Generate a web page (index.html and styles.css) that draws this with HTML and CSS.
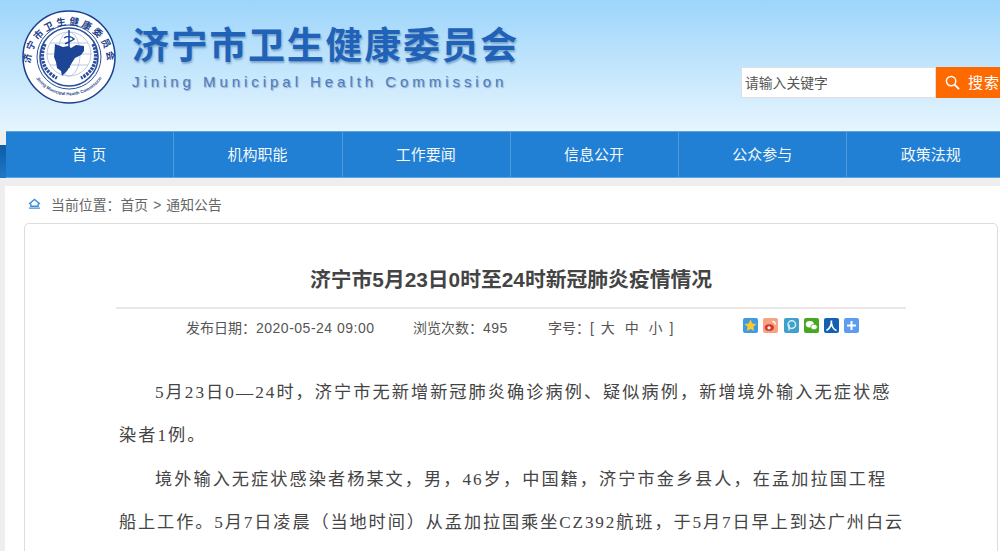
FILE: index.html
```html
<!DOCTYPE html>
<html lang="zh-CN">
<head>
    <meta charset="UTF-8">
    <title>济宁市5月23日0时至24时新冠肺炎疫情情况</title>
    <link rel="stylesheet" href="styles.css">
</head>
<body>
    <div class="top">
        <div class="header">
            <svg class="emblem" viewBox="0 0 94 94">
                <defs>
                    <path id="ring-top" d="M9.500 62 A38.500 38.500 0 1 1 84.500 62"/>
                    <path id="ring-bottom" d="M14 68 A40 40 0 0 0 80 68"/>
                </defs>
                <circle cx="47" cy="47" r="46" fill="#fff" stroke="#1d3f8e" stroke-width="1.5"/>
                <circle cx="47" cy="47" r="32" fill="#fff" stroke="#2a4f9c" stroke-width="1"/>
                <circle cx="47" cy="47" r="29" fill="none" stroke="#2a4f9c" stroke-width="1.600"/>
                <g fill="none" stroke="#a9bcdc" stroke-width=".8">
                    <ellipse cx="47" cy="44" rx="22" ry="22"/>
                    <ellipse cx="47" cy="44" rx="11" ry="22"/>
                    <path d="M25 44h44M28 33h38M28 55h38"/>
                </g>
                <path d="M33 34l8 3 5-1 3 2 5-3 8 1 0 5-3 4-6 3-2 3-3 5-3 5-3 3-2 2-1-5-4-3-1-6-2-5z" fill="#1d4596"/>
                <path d="M47 20v38M42 28c4-3 8-1 10 1-2 2-6 3-9 5" fill="none" stroke="#1d4596" stroke-width="1.500"/>
                <path d="M23 34c-6 13-2 27 12 34M71 34c6 13 2 27-12 34" fill="none" stroke="#2a4f9c" stroke-width="3.500" stroke-dasharray="2.500 1"/>
                <text class="emblem-cn"><textPath href="#ring-top" startOffset="50%" text-anchor="middle">济宁市卫生健康委员会</textPath></text>
                <text class="emblem-en"><textPath href="#ring-bottom" startOffset="50%" text-anchor="middle">Jining Municipal Health Commission</textPath></text>
            </svg>
            <div class="brand">
                <div class="brand-cn">济宁市卫生健康委员会</div>
                <div class="brand-en">Jining Municipal Health Commission</div>
            </div>
            <div class="search">
                <div class="search-input">请输入关键字</div>
                <div class="search-btn">
                    <svg class="search-icon" viewBox="0 0 16 16">
                        <circle cx="6.500" cy="6.500" r="5" fill="none" stroke="#fff" stroke-width="1.600"/>
                        <path d="M10.200 10.200L15 15" stroke="#fff" stroke-width="2"/>
                    </svg>
                    搜索
                </div>
            </div>
        </div>
        <div class="nav-row">
            <div class="nav-fold"></div>
            <ul class="nav">
                <li>首 页</li>
                <li>机构职能</li>
                <li>工作要闻</li>
                <li>信息公开</li>
                <li>公众参与</li>
                <li>政策法规</li>
            </ul>
        </div>
    </div>

    <div class="page">
        <div class="crumb">
            <svg class="crumb-icon" viewBox="0 0 14 12">
                <path d="M1 6.500L7 1.500l6 5M3 6v3h8V6M1 11h12" fill="none" stroke="#3f8fd6" stroke-width="1.500"/>
            </svg>
            <span>当前位置：首页<span class="crumb-sep">&gt;</span>通知公告</span>
        </div>
        <div class="card">
            <h1 class="title">济宁市5月23日0时至24时新冠肺炎疫情情况</h1>
            <div class="meta">
                <span class="meta-date">发布日期：<span class="num">2020-05-24 09:00</span></span>
                <span class="meta-views">浏览次数：<span class="num">495</span></span>
                <span class="meta-size">字号：[ <i>大</i> <i>中</i> <i>小</i> ]</span>
                <div class="share">
                    <svg viewBox="0 0 15 15"><rect width="15" height="15" rx="2" fill="#3d9be6"/><path d="M7.500 1.500l1.800 3.900 4.200.5-3.100 2.900.8 4.200-3.700-2.100-3.700 2.100.8-4.200L1.500 5.900l4.200-.5z" fill="#fbc92c"/></svg>
                    <svg viewBox="0 0 15 15"><rect width="15" height="15" rx="2" fill="#f4a484"/><ellipse cx="6.300" cy="9.600" rx="4.600" ry="3.400" fill="#d8362a"/><circle cx="6" cy="9.800" r="1.600" fill="#fff"/><path d="M9.500 3.500a3 3 0 0 1 3 3" fill="none" stroke="#fff" stroke-width="1.400"/></svg>
                    <svg viewBox="0 0 15 15"><rect width="15" height="15" rx="2" fill="#3fa0cc"/><circle cx="7.800" cy="6.600" r="3.800" fill="none" stroke="#d6eef8" stroke-width="1.500"/><path d="M5 6.500v6" stroke="#d6eef8" stroke-width="1.500"/></svg>
                    <svg viewBox="0 0 15 15"><rect width="15" height="15" rx="2" fill="#45a81e"/><ellipse cx="5.800" cy="6.200" rx="4" ry="3.200" fill="#fff"/><ellipse cx="10" cy="9" rx="3.300" ry="2.700" fill="#fff" stroke="#45a81e" stroke-width=".7"/></svg>
                    <svg viewBox="0 0 15 15"><rect width="15" height="15" rx="2" fill="#1560b0"/><path d="M7.500 2.500c0 5-1.500 8-5 10M7.500 5c.5 4 2 6.500 5 7.500" fill="none" stroke="#fff" stroke-width="1.700"/></svg>
                    <svg viewBox="0 0 15 15"><rect width="15" height="15" rx="2" fill="#5d9df0"/><path d="M7.500 3v9M3 7.500h9" stroke="#fff" stroke-width="2"/></svg>
                </div>
            </div>
            <div class="content">
                <p>5月23日0—24时，济宁市无新增新冠肺炎确诊病例、疑似病例，新增境外输入无症状感染者1例。</p>
                <p>境外输入无症状感染者杨某文，男，46岁，中国籍，济宁市金乡县人，在孟加拉国工程<br><span class="tight">船上工作。5月7日凌晨（当地时间）从孟加拉国乘坐CZ392航班，于5月7日早上到达广州白云</span></p>
            </div>
        </div>
    </div>
</body>
</html>
```

FILE: styles.css
```css
html, body {
    margin: 0;
    padding: 0;
    height: 551px;
    overflow: hidden;
}
body {
    font-family: "Liberation Sans", "Noto Sans CJK SC", sans-serif;
    background: #eeeeee;
    color: #666;
}
.top {
    background: linear-gradient(to bottom, #9dd5fb 0, #e6f5fe 131px);
    background-repeat: no-repeat;
    background-size: 100% 131px;
}
.header {
    height: 131px;
    display: flex;
    padding: 10px 0 0 22px;
    box-sizing: border-box;
    overflow: hidden;
}
.emblem {
    width: 94px;
    height: 94px;
    flex: none;
}
.emblem-cn {
    font-size: 9.5px;
    font-weight: bold;
    fill: #1d3f8e;
    letter-spacing: 2.6px;
}
.emblem-en {
    font-size: 4.4px;
    font-weight: bold;
    fill: #1d3f8e;
}
.brand {
    margin: 14px 0 0 16px;
    width: 420px;
    flex: none;
}
.brand-cn {
    font-size: 37px;
    font-weight: bold;
    line-height: 46px;
    letter-spacing: 1.7px;
    white-space: nowrap;
    color: #1f62b8;
    text-shadow: 1px 2px 2px rgba(40, 80, 130, 0.4);
}
.brand-en {
    font-size: 15px;
    line-height: 20px;
    letter-spacing: 3.95px;
    white-space: nowrap;
    color: #4f7cc0;
    text-shadow: 1px 1px 1px rgba(60, 90, 140, 0.45);
    margin-top: 2px;
}
.search {
    display: flex;
    margin: 57px 0 0 189px;
    height: 31px;
    flex: none;
}
.search-input {
    width: 195px;
    height: 31px;
    box-sizing: border-box;
    background: #fff;
    border: 1px solid #dcdfe3;
    font-size: 13.8px;
    line-height: 31px;
    padding-left: 3px;
    color: #555;
}
.search-btn {
    width: 70px;
    height: 31px;
    background: #ff6a00;
    color: #fff;
    font-size: 15px;
    line-height: 30px;
    letter-spacing: 1px;
    display: flex;
    align-items: center;
    gap: 8px;
    padding-left: 9px;
    box-sizing: border-box;
    white-space: nowrap;
}
.search-icon {
    width: 15px;
    height: 15px;
    flex: none;
}
.nav-row {
    display: flex;
    height: 47px;
}
.nav-fold {
    width: 6px;
    flex: none;
    margin-top: 14px;
    background: linear-gradient(to bottom, #0d5ca6, #1e78c8);
}
.nav {
    display: flex;
    list-style: none;
    margin: 0;
    padding: 0;
    flex: none;
    background: #2180d3;
    border-top: 1px solid #5aa5e6;
    border-bottom: 1px solid #5aa5e6;
    box-sizing: border-box;
}
.nav li {
    width: 168.3px;
    box-sizing: border-box;
    border-right: 1px solid #4f9de2;
    padding-right: 1px;
    text-align: center;
    color: #fff;
    font-size: 15px;
    line-height: 45px;
    opacity: 0.95;
}
.page {
    margin: 8px 0 0 5px;
    background: #fff;
    height: 400px;
    padding: 0 2px 0 19px;
}
.crumb {
    height: 37px;
    font-size: 13.8px;
    letter-spacing: 0.08px;
    display: flex;
    align-items: center;
    gap: 10px;
    padding: 0 0 2px 4px;
    box-sizing: border-box;
    color: #666;
}
.crumb-sep {
    margin: 0 5px;
}
.crumb-icon {
    width: 13px;
    height: 11px;
    flex: none;
}
.card {
    border: 1px solid #dddddd;
    border-radius: 5px;
    height: 400px;
    padding: 0 91px;
}
.title {
    margin: 0;
    padding-top: 39px;
    height: 44px;
    font-size: 20.8px;
    line-height: 34px;
    font-weight: bold;
    text-align: center;
    color: #444;
    border-bottom: 2px solid #e8e8e8;
}
.meta {
    display: flex;
    align-items: center;
    height: 36px;
    font-size: 14px;
    color: #555;
    white-space: nowrap;
    padding-left: 70px;
}
.num {
    letter-spacing: 0.5px;
}
.meta-date {
    width: 227px;
}
.meta-views {
    width: 135px;
}
.meta-size {
    width: 195px;
}
.meta-size i {
    font-style: normal;
    margin: 0 3px;
}
.share {
    display: flex;
    gap: 5.3px;
    margin-top: -4px;
}
.share svg {
    width: 15px;
    height: 15px;
}
.content {
    margin: 26px 0 0 3px;
    font-family: "Liberation Serif", "Noto Sans CJK SC", serif;
    font-size: 17.2px;
    line-height: 43.4px;
    letter-spacing: 2.03px;
    color: #444;
}
.content p {
    margin: 0;
    text-indent: 36px;
}
.tight {
    letter-spacing: 1.87px;
    white-space: nowrap;
}
```
